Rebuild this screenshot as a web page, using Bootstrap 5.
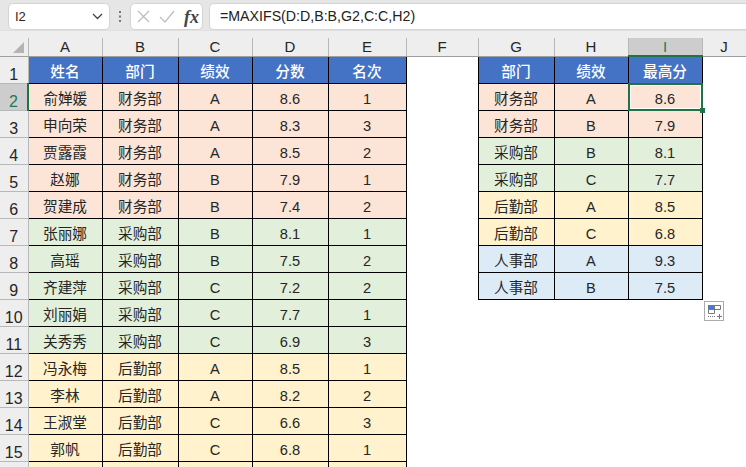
<!DOCTYPE html>
<html lang="zh"><head><meta charset="utf-8">
<link href="https://cdn.jsdelivr.net/npm/bootstrap@5.3.0/dist/css/bootstrap.min.css" rel="stylesheet">
<style>
html,body{height:467px;overflow:hidden;background:#fff}
body{font-family:"Liberation Sans","Noto Sans CJK SC",sans-serif;font-size:14px;color:#262626}
.fbar{height:31px;background:#e6e6e6;padding-top:3px;gap:7px;border-bottom:1px solid #e0e0e0}
.fbox{height:27px;background:#fff;border:1px solid #d4d4d4;border-radius:5px}
.namebox{width:102px;margin-left:8px;padding:0 6px 0 6px;font-size:13px}
.grip{width:4px;color:#666;margin-left:1px}
.btnbox{width:73px;padding:0 3px 0 6px;margin-left:1px}
.fx{font-family:"Liberation Serif",serif;font-style:italic;font-weight:700;font-size:18px;color:#444;line-height:1}
.formula{flex:1;padding-left:10px;font-size:14.2px;border-right:0;border-radius:5px 0 0 5px;color:#222;margin-left:-1px}
.gap-band{height:7px;background:#eee}
.sheet{table-layout:fixed;border-collapse:collapse;width:746px}
.sheet th,.sheet td{padding:0;text-align:center;vertical-align:middle;overflow:hidden;white-space:nowrap;font-weight:400}
.sheet .hrow th{height:18px;background:#eee;border-right:1px solid #b8b8b8;border-bottom:1px solid #9f9f9f;font-size:15px;line-height:17px;color:#262626}
.sheet .hrow .corner{position:relative}
.tri{position:absolute;right:4px;bottom:3px;width:0;height:0;border-left:11px solid transparent;border-bottom:11px solid #b4b4b4}
.sheet .hrow .hsel{background:#cdcdcd;color:#1c7a55;border-bottom:2px solid #217346}
.sheet tr.dr{height:27px}
.sheet .rh{background:#eee;border-right:1px solid #b8b8b8;border-bottom:1px solid #b8b8b8;font-size:16px;vertical-align:bottom;line-height:16px}
.sheet .rh.rsel{background:#cdcdcd;color:#1c7a55;border-right:2px solid #217346}
.sheet .c{border:1px solid #000;font-size:14.67px;color:#262626;padding-top:4px;line-height:22px}
.sheet .blank{border:0;background:#fff}
.sheet .t-h{background:#4472c4;font-weight:500;color:#fff}
.t-r{background:#fce4d6}
.t-g{background:#e2efda}
.t-y{background:#fff2cc}
.t-b{background:#ddebf7}
.cur{position:relative}
.cur::before{content:"";position:absolute;inset:-1px;border:2px solid #217346;outline:1px solid #fff;outline-offset:-3px}
.cur::after{content:"";position:absolute;right:-3px;bottom:-3px;width:5px;height:5px;background:#217346;border:0}
.sheet td.cur{overflow:visible}
.paste{position:absolute;left:704px;top:301px;width:20px;height:20px;background:#fff;border:1px solid #ababab}
</style></head><body>
<div class="fbar d-flex align-items-start">
 <div class="fbox namebox d-flex align-items-center justify-content-between"><span>I2</span><svg width="11" height="7" viewBox="0 0 11 7"><path d="M1 1l4.5 4.5L10 1" fill="none" stroke="#444" stroke-width="1.3"/></svg></div>
 <svg class="grip align-self-center" width="3" height="11" viewBox="0 0 3 11"><rect x="0.5" y="0" width="2" height="2" fill="#777"/><rect x="0.5" y="4.5" width="2" height="2" fill="#777"/><rect x="0.5" y="9" width="2" height="2" fill="#777"/></svg>
 <div class="fbox btnbox d-flex align-items-center justify-content-between">
  <svg width="13" height="13" viewBox="0 0 13 13"><path d="M1 1l11 11M12 1L1 12" stroke="#bdbdbd" stroke-width="1.2" fill="none"/></svg>
  <svg width="16" height="13" viewBox="0 0 16 13"><path d="M1 7l5 5L15 1" stroke="#bdbdbd" stroke-width="1.2" fill="none"/></svg>
  <span class="fx">fx</span>
 </div>
 <div class="fbox formula d-flex align-items-center">=MAXIFS(D:D,B:B,G2,C:C,H2)</div>
</div>
<div class="gap-band"></div>
<table class="sheet">
<colgroup id="cg"></colgroup>
<tbody id="tb"></tbody>
</table>
<div class="paste"><svg width="18" height="18" viewBox="0 0 18 18" class="d-block"><rect x="3" y="3" width="6" height="4" fill="#3b7de8"/><path d="M3.5 3.5h12v4h-12zM3.5 7.5h6v4h-6zM9.5 3.5v4" fill="none" stroke="#777"/><path d="M3 14.5h7" stroke="#777" stroke-dasharray="1 1"/><path d="M12 14.5h5M14.5 12v5" stroke="#777"/></svg></div>
<script>
var w=[28,74,76,74,76,78,72,76,74,74,44];
document.getElementById('cg').innerHTML=w.map(function(x){return '<col style="width:'+x+'px">'}).join('');
var L=[['姓名','部门','绩效','分数','名次'],
['俞婵媛','财务部','A','8.6','1'],['申向荣','财务部','A','8.3','3'],['贾露霞','财务部','A','8.5','2'],['赵娜','财务部','B','7.9','1'],['贺建成','财务部','B','7.4','2'],
['张丽娜','采购部','B','8.1','1'],['高瑶','采购部','B','7.5','2'],['齐建萍','采购部','C','7.2','2'],['刘丽娟','采购部','C','7.7','1'],['关秀秀','采购部','C','6.9','3'],
['冯永梅','后勤部','A','8.5','1'],['李林','后勤部','A','8.2','2'],['王淑堂','后勤部','C','6.6','3'],['郭帆','后勤部','C','6.8','1'],['','','','','']];
var R=[['部门','绩效','最高分'],['财务部','A','8.6'],['财务部','B','7.9'],['采购部','B','8.1'],['采购部','C','7.7'],['后勤部','A','8.5'],['后勤部','C','6.8'],['人事部','A','9.3'],['人事部','B','7.5']];
function cl(i,s){if(i==0)return 't-h';return s=='财务部'?'t-r':s=='采购部'?'t-g':s=='后勤部'?'t-y':s=='人事部'?'t-b':''}
var h='<tr class="hrow"><th class="corner"><span class="tri"></span></th>'+'ABCDEFGHIJ'.split('').map(function(c){return '<th'+(c=='I'?' class="hsel"':'')+'>'+c+'</th>'}).join('')+'</tr>';
L.forEach(function(r,i){
 var k=i==0?'t-h':(i<=5?'t-r':i<=10?'t-g':'t-y');
 h+='<tr class="dr"><th class="rh'+(i==1?' rsel':'')+'">'+(i<15?i+1:'')+'</th>';
 r.forEach(function(v){h+='<td class="c '+k+'">'+v+'</td>'});
 h+='<td class="blank"></td>';
 if(i<R.length){var q=R[i],kk=cl(i,q[0]);q.forEach(function(v,j){h+='<td class="c '+kk+(i==1&&j==2?' cur':'')+'">'+v+'</td>'})}
 else h+='<td class="blank" colspan="3"></td>';
 h+='<td class="blank"></td></tr>';
});
document.getElementById('tb').innerHTML=h;
</script>
<script src="https://cdn.jsdelivr.net/npm/bootstrap@5.3.0/dist/js/bootstrap.bundle.min.js"></script>
</body></html>
